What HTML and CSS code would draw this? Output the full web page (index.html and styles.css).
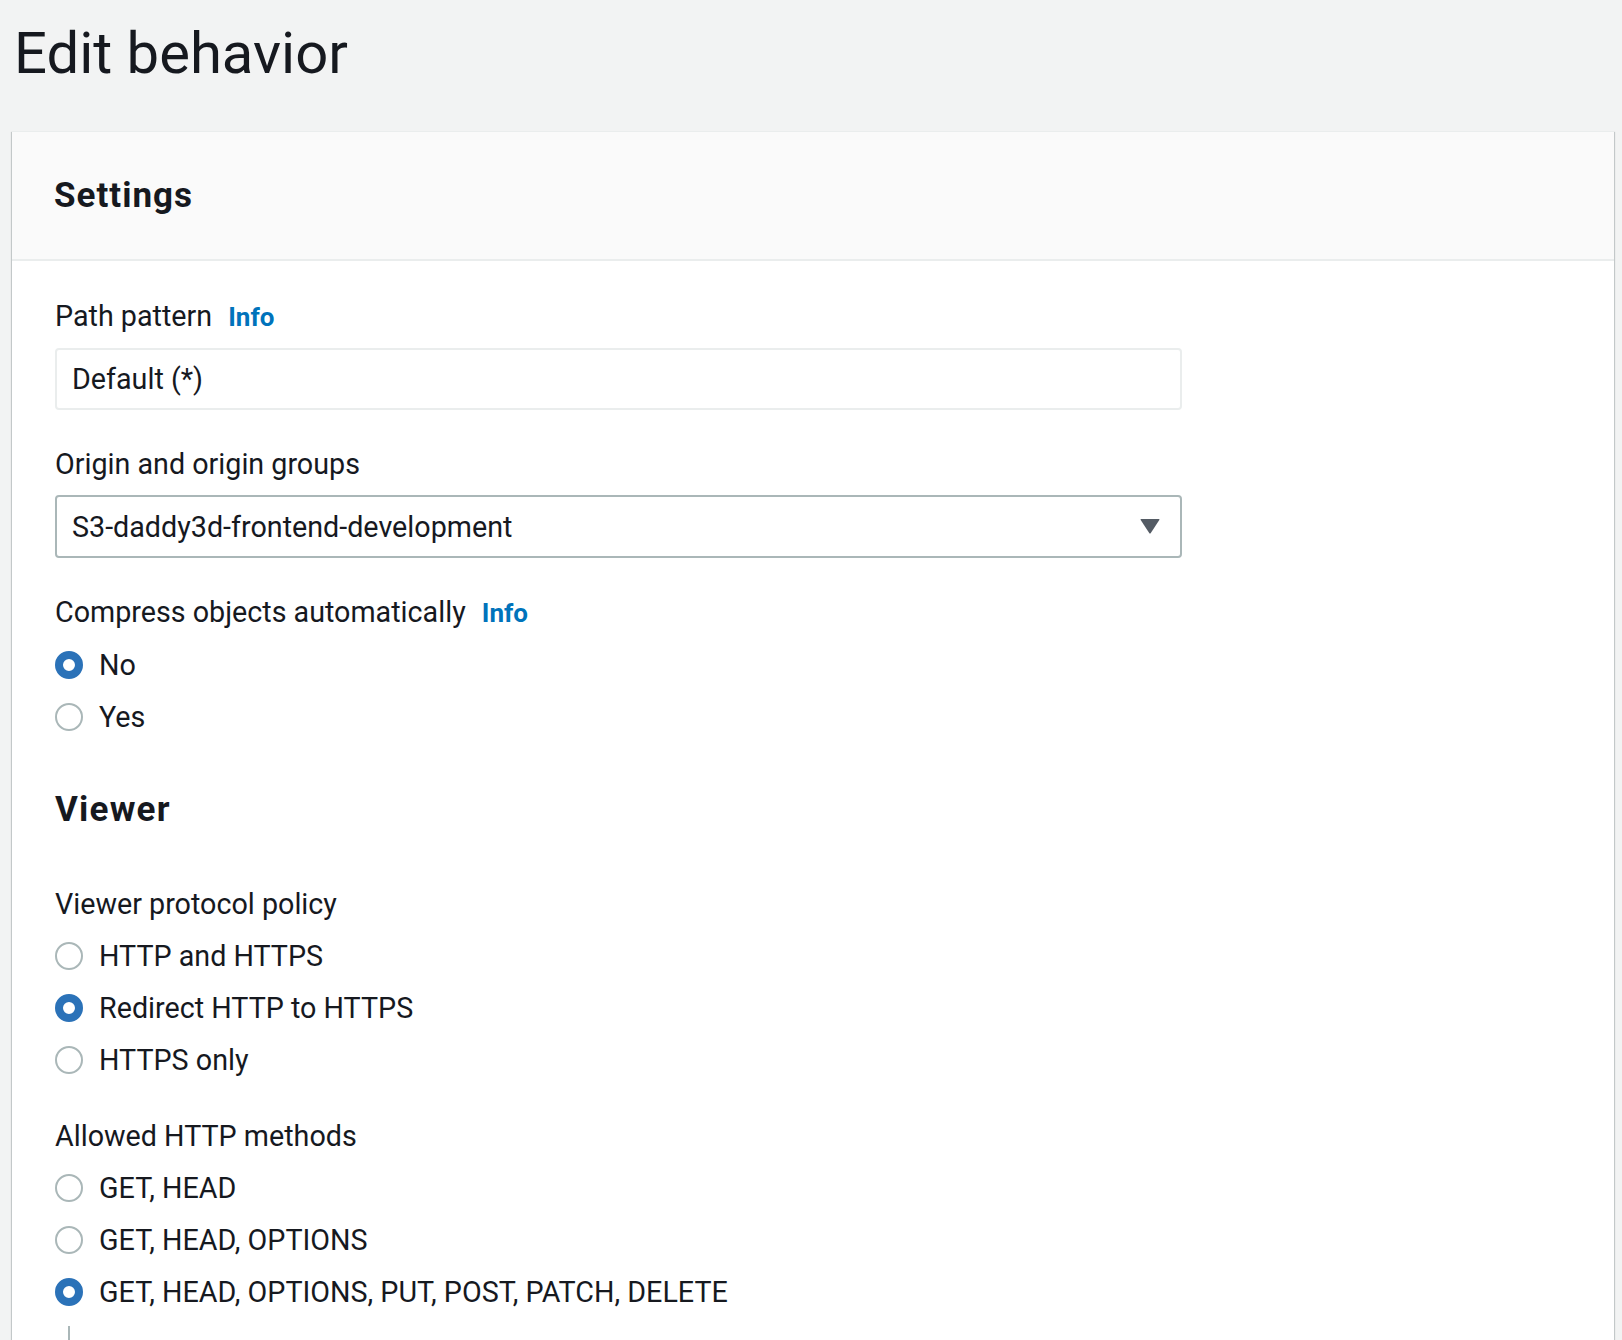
FILE: index.html
```html
<!DOCTYPE html>
<html lang="en">
<head>
<meta charset="utf-8">
<title>Edit behavior</title>
<link rel="stylesheet" href="styles.css">
</head>
<body>
<h1 class="page-title">Edit behavior</h1>
<section class="card">
  <header class="card-header"><h2>Settings</h2></header>
  <div class="card-body">
    <div class="field">
      <div class="label">Path pattern <a class="info">Info</a></div>
      <div class="input">Default (*)</div>
    </div>
    <div class="field">
      <div class="label">Origin and origin groups</div>
      <div class="input select">S3-daddy3d-frontend-development
        <svg class="caret" width="20" height="15" viewBox="0 0 20 15"><path d="M1.2 0H18.8Q20 0 19.3 1.1L10.8 14Q10 15 9.2 14L0.7 1.1Q0 0 1.2 0Z" fill="#545b64"/></svg>
      </div>
    </div>
    <div class="field field-radios">
      <div class="label">Compress objects automatically <a class="info">Info</a></div>
      <div class="radios">
        <div class="radio checked"><span class="dot"></span>No</div>
        <div class="radio"><span class="dot"></span>Yes</div>
      </div>
    </div>
    <h3 class="section-title">Viewer</h3>
    <div class="field field-radios">
      <div class="label">Viewer protocol policy</div>
      <div class="radios">
        <div class="radio"><span class="dot"></span>HTTP and HTTPS</div>
        <div class="radio checked"><span class="dot"></span>Redirect HTTP to HTTPS</div>
        <div class="radio"><span class="dot"></span>HTTPS only</div>
      </div>
    </div>
    <div class="field field-radios last">
      <div class="label">Allowed HTTP methods</div>
      <div class="radios">
        <div class="radio"><span class="dot"></span>GET, HEAD</div>
        <div class="radio"><span class="dot"></span>GET, HEAD, OPTIONS</div>
        <div class="radio checked"><span class="dot"></span>GET, HEAD, OPTIONS, PUT, POST, PATCH, DELETE</div>
      </div>
      <div class="sub-line"></div>
    </div>
  </div>
</section>
</body>
</html>
```

FILE: styles.css
```css
html, body {
  margin: 0;
  padding: 0;
}
body {
  background: #f2f3f3;
  color: #16191f;
  font-family: Roboto, "Liberation Sans", sans-serif;
  font-size: 28.7px;
  height: 1340px;
  overflow: hidden;
}
.page-title {
  margin: 0;
  padding: 18px 0 0 14px;
  height: 113px;
  box-sizing: border-box;
  font-size: 58px;
  font-weight: 400;
  line-height: 70px;
}
.card {
  margin-left: 12px;
  margin-top: 18px;
  width: 1602px;
  background: #fff;
  box-shadow: 0 1px 1px 0 rgba(0, 28, 36, 0.3), 1px 1px 1px 0 rgba(0, 28, 36, 0.15), -1px 1px 1px 0 rgba(0, 28, 36, 0.15);
  border-top: 1px solid #eaeded;
}
.card-header {
  background: #fafafa;
  height: 127px;
  border-bottom: 2px solid #eaeded;
  padding-left: 42px;
  display: flex;
  align-items: center;
}
.card-header h2 {
  margin: 0;
  font-size: 35px;
  font-weight: 700;
  letter-spacing: 1px;
  line-height: 41px;
}
.card-body {
  padding: 35px 0 60px 43px;
  display: flex;
  flex-direction: column;
}
.field {
  display: flex;
  flex-direction: column;
  margin-bottom: 34px;
}
.field-radios {
  margin-bottom: 30px;
}
.field.last {
  margin-bottom: 0;
}
.label {
  line-height: 40px;
  margin-bottom: 11px;
}
.field-radios .label {
  margin-bottom: 6px;
}
.info {
  color: #0073bb;
  font-weight: 700;
  margin-left: 9px;
  font-size: 26px;
}
.input {
  width: 1127px;
  height: 62px;
  box-sizing: border-box;
  border: 2px solid #eaeded;
  border-radius: 4px;
  padding: 0 15px;
  display: flex;
  align-items: center;
  background: #fff;
}
.select {
  height: 63px;
  border-color: #aab7b8;
  justify-content: space-between;
  padding-right: 20px;
}
.caret {
  display: block;
}
.radios {
  display: flex;
  flex-direction: column;
}
.radio {
  display: flex;
  align-items: center;
  height: 52px;
}
.dot {
  width: 28px;
  height: 28px;
  box-sizing: border-box;
  border-radius: 50%;
  border: 2px solid #aab7b8;
  margin-right: 16px;
  flex: none;
}
.radio.checked .dot {
  border: 8px solid #2b72b8;
}
.section-title {
  margin: 15px 0 52px;
  font-size: 35px;
  font-weight: 700;
  letter-spacing: 1.2px;
  line-height: 44px;
}
.sub-line {
  margin: 8px 0 0 13px;
  width: 2px;
  height: 40px;
  background: #aab7b8;
}
```
